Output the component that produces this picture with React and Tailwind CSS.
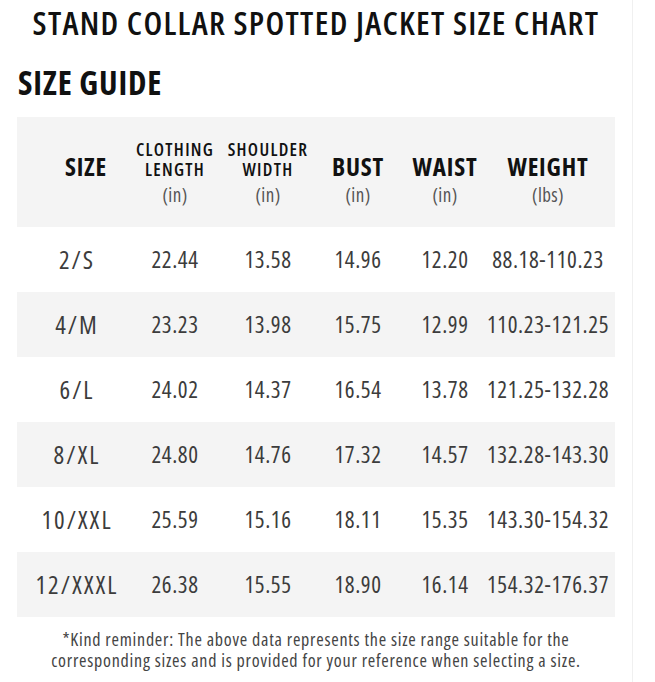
const FONT = { fontFamily: '"Open Sans", "Liberation Sans", sans-serif' }

const COLS = 'grid grid-cols-[120px_76px_110px_70px_104px_102px]'

const HEADERS = [
  { label: ['SIZE'], big: true },
  { label: ['CLOTHING', 'LENGTH'], unit: '(in)' },
  { label: ['SHOULDER', 'WIDTH'], unit: '(in)' },
  { label: ['BUST'], big: true, unit: '(in)' },
  { label: ['WAIST'], big: true, unit: '(in)' },
  { label: ['WEIGHT'], big: true, unit: '(lbs)' },
]

const ROWS = [
  ['2/S', '22.44', '13.58', '14.96', '12.20', '88.18-110.23'],
  ['4/M', '23.23', '13.98', '15.75', '12.99', '110.23-121.25'],
  ['6/L', '24.02', '14.37', '16.54', '13.78', '121.25-132.28'],
  ['8/XL', '24.80', '14.76', '17.32', '14.57', '132.28-143.30'],
  ['10/XXL', '25.59', '15.16', '18.11', '15.35', '143.30-154.32'],
  ['12/XXXL', '26.38', '15.55', '18.90', '16.14', '154.32-176.37'],
]

function HeaderCell({ h, first }) {
  return (
    <div className={`flex flex-col items-center ${first ? 'pl-[18px]' : ''}`}>
      <div className="flex h-[62px] flex-col items-center justify-end">
        {h.big ? (
          <span className="whitespace-nowrap text-[25px] font-bold leading-none tracking-[0.8px] text-[#111]">
            {h.label[0]}
          </span>
        ) : (
          h.label.map((l) => (
            <p key={l} className="whitespace-nowrap text-[18px] font-semibold leading-[20px] tracking-[1.3px] text-[#111]">
              {l}
            </p>
          ))
        )}
      </div>
      {h.unit && <span className="mt-[7px] text-[19px] leading-none tracking-[0.4px] text-[#555]">{h.unit}</span>}
    </div>
  )
}

export default function App() {
  return (
    <div className="flex h-[682px] w-[655px] bg-white font-stretch-[75%]" style={FONT}>
      <div className="flex w-[632px] flex-col">
        <h1 className="text-center text-[33px] font-semibold leading-[46px] tracking-[1.3px] text-[#111]">
          STAND COLLAR SPOTTED JACKET SIZE CHART
        </h1>
        <h2 className="mt-[20px] pl-[18px] text-[33px] font-bold leading-none tracking-[0.8px] text-[#111]">
          SIZE GUIDE
        </h2>

        <div className="ml-[17px] mt-[18px] w-[598px]">
          <div className={`${COLS} h-[110px] bg-[#f4f4f4]`}>
            {HEADERS.map((h, i) => (
              <HeaderCell key={i} h={h} first={i === 0} />
            ))}
          </div>
          {ROWS.map((r, i) => (
            <div key={r[0]} className={`${COLS} h-[65px] items-center ${i % 2 ? 'bg-[#f4f4f4]' : ''}`}>
              {r.map((v, j) => (
                <div key={j} className="flex justify-center">
                  <span
                    className={`whitespace-nowrap leading-none text-[#3c3c3c] ${
                      j === 0 ? 'text-[25px] tracking-[2px]' : 'text-[23px] tracking-[0.6px]'
                    }`}
                  >
                    {v}
                  </span>
                </div>
              ))}
            </div>
          ))}
        </div>

        <div className="mt-[12px] text-center text-[18px] leading-[21px] tracking-[0.75px] text-[#444]">
          <p>*Kind reminder: The above data represents the size range suitable for the</p>
          <p>corresponding sizes and is provided for your reference when selecting a size.</p>
        </div>
      </div>
      <div className="flex-1 border-l border-[#f0f0f0]" />
    </div>
  )
}
